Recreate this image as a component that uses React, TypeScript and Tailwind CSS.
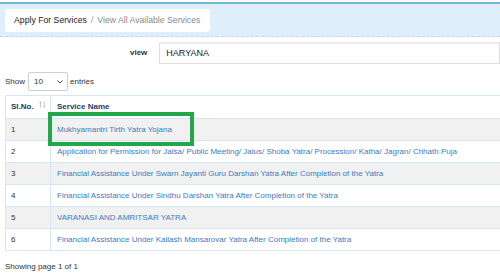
import React from 'react'

const SERVICES = [
  'Mukhyamantri Tirth Yatra Yojana',
  'Application for Permission for Jalsa/ Public Meeting/ Jalus/ Shoba Yatra/ Procession/ Katha/ Jagran/ Chhath Puja',
  'Financial Assistance Under Swarn Jayanti Guru Darshan Yatra After Completion of the Yatra',
  'Financial Assistance Under Sindhu Darshan Yatra After Completion of the Yatra',
  'VARANASI AND AMRITSAR YATRA',
  'Financial Assistance Under Kailash Mansarovar Yatra After Completion of the Yatra',
]

function SortIcon() {
  return (
    <svg width="7" height="7" viewBox="0 0 7 7" className="ml-auto -mt-[5px]" fill="none" stroke="#b9b9b9" strokeWidth="0.8">
      <path d="M1.5 6.5V0.8M0.3 2L1.5 0.8L2.7 2" />
      <path d="M5.2 0.5V6.2M4 5L5.2 6.2L6.4 5" />
    </svg>
  )
}

export default function App() {
  return (
    <div className="relative h-[273px] w-[500px] overflow-hidden bg-white font-['Liberation_Sans',Arial,sans-serif] text-[#333]">
      <div className="mt-[2px] border-t-2 border-[#74b5da] bg-[#dfeefb] px-[5px] pt-[5px] pb-[4px] border-b border-b-[#c5d5e4] [border-bottom-style:dashed]">
        <div className="flex h-[23px] w-[205px] items-center rounded-[3px] bg-white pl-[9px] text-[8.7px]">
          <span className="text-[#222]">Apply For Services</span>
          <span className="mx-[4px] text-[#9a9a9a]">/</span>
          <span className="text-[#8a8a8a]">View All Available Services</span>
        </div>
      </div>

      <div className="mt-[5px] flex items-center pl-[130px]">
        <span className="w-[31px] text-[8px] font-bold text-[#333]">view</span>
        <div className="flex h-[22px] w-[360px] items-center border border-[#dedede] border-t-2 border-t-[#ebebeb] pl-[6px] text-[9px] text-[#222]">
          HARYANA
        </div>
      </div>

      <div className="mt-[8px] flex items-center pl-[5px] text-[8px] text-[#333]">
        <span>Show</span>
        <div className="ml-[3px] flex h-[19px] w-[40px] items-center rounded-[2px] border border-[#cfcfcf] pl-[5px]">
          <span>10</span>
          <svg width="6" height="4" viewBox="0 0 6 4" className="ml-[14px]" fill="none" stroke="#444" strokeWidth="1">
            <path d="M0.5 0.5L3 3L5.5 0.5" />
          </svg>
        </div>
        <span className="ml-[2px]">entries</span>
      </div>

      <div className="relative mt-[4px] ml-[5px]">
        <table className="w-[520px] border-collapse text-[8px]">
          <thead>
            <tr className="h-[23px] bg-white">
              <th className="w-[45px] border border-[#d5e6f5] pl-[5px] pr-[4px] text-left font-bold text-[#22384f]">
                <div className="flex items-center">
                  <span>Sl.No.</span>
                  <SortIcon />
                </div>
              </th>
              <th className="border border-[#d5e6f5] pl-[6px] text-left font-bold text-[#1f3d60]">Service Name</th>
            </tr>
          </thead>
          <tbody>
            {SERVICES.map((name, i) => (
              <tr key={name} className={i % 2 === 0 ? 'h-[22px] bg-[#f1f1f1]' : 'h-[22px] bg-white'}>
                <td className="border border-[#d5e6f5] pl-[5px] text-[#333]">{i + 1}</td>
                <td className="border border-[#d5e6f5] pl-[6px] whitespace-nowrap text-[#3d7cbc]">{name}</td>
              </tr>
            ))}
          </tbody>
        </table>
        <div className="absolute left-[43px] top-[17px] h-[34px] w-[146px] border-4 border-[#22a84b]" />
      </div>

      <p className="mt-[10px] pl-[5px] text-[8px] text-[#333]">Showing page 1 of 1</p>
    </div>
  )
}
